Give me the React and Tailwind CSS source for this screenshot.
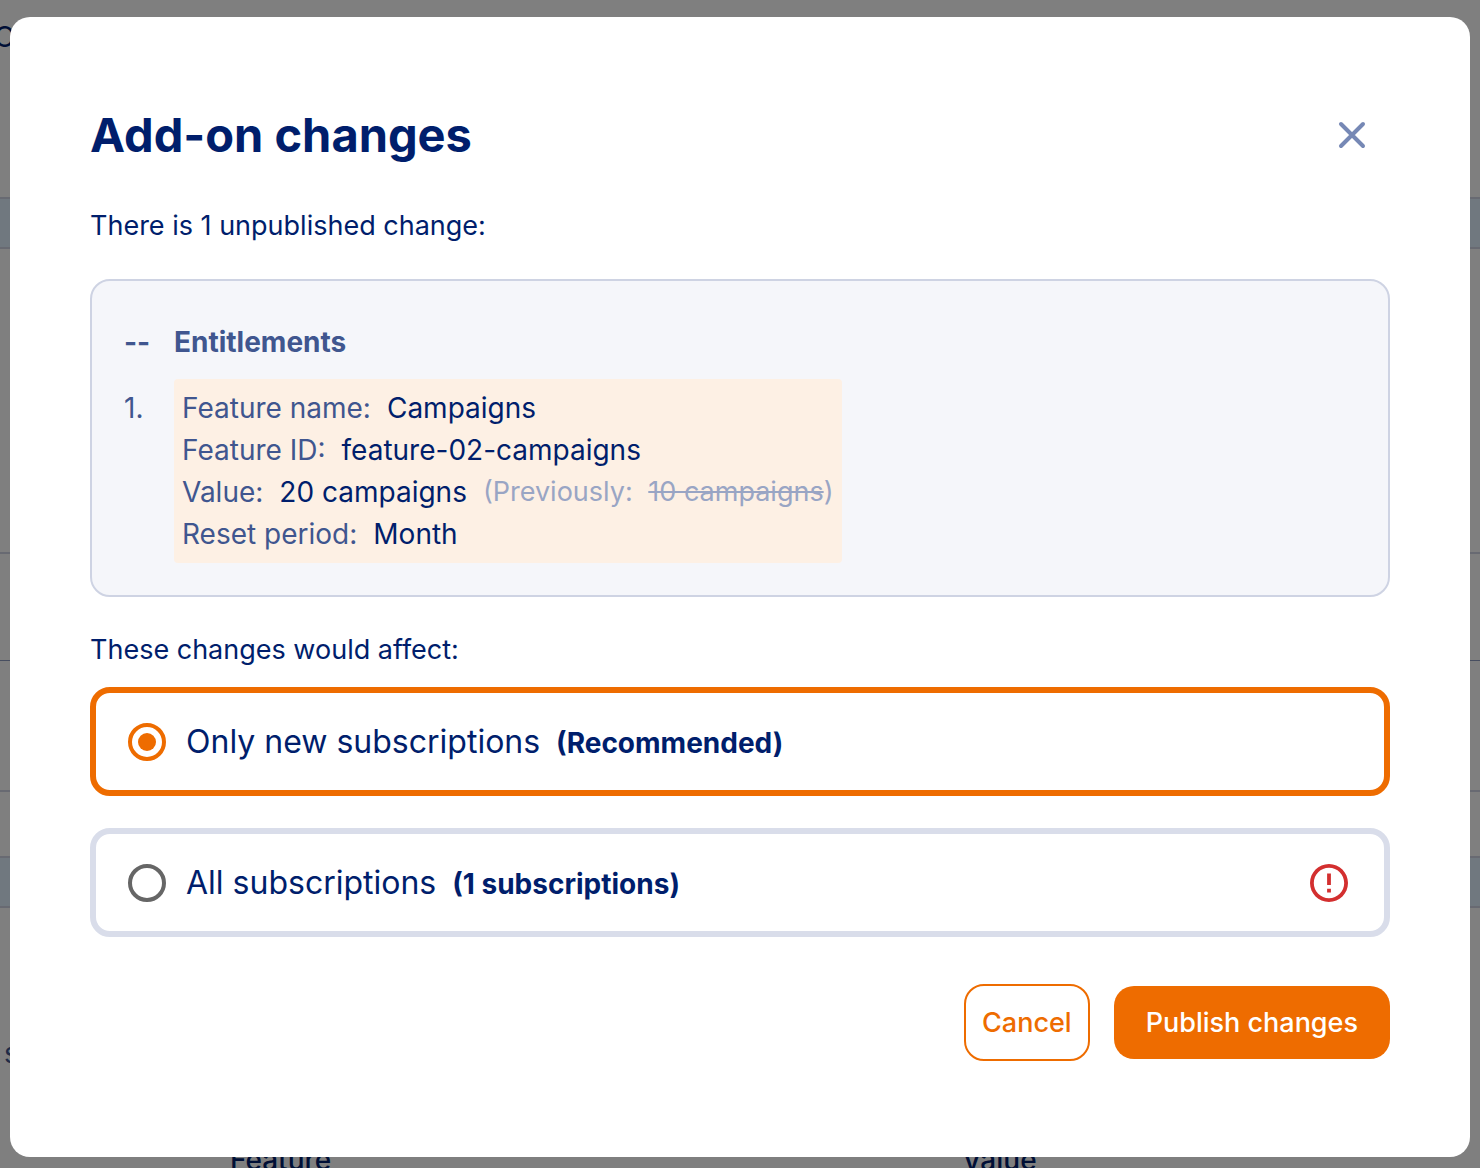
import { useState } from "react";

function BackgroundPage() {
  return (
    <div aria-hidden="true" className="flex h-screen flex-col overflow-hidden bg-white text-[28px] leading-[42px] text-[#001e6c]">
      <div className="h-[197px] shrink-0 pt-4">
        <p className="-ml-1.5">Overview</p>
      </div>
      <div className="h-[52px] shrink-0 border-y-2 border-[#d0d4e4] bg-[#e0f0ff]" />
      <div className="h-[305px] shrink-0 border-b-2 border-[#d0d4e4]" />
      <div className="h-[107px] shrink-0 border-b border-[#8f9cc0]" />
      <div className="h-[131px] shrink-0 border-b-2 border-[#d0d4e4]" />
      <div className="h-16 shrink-0" />
      <div className="h-[52px] shrink-0 border-y-2 border-[#d0d4e4] bg-[#e0f0ff]" />
      <div className="h-[231px] shrink-0 pt-[124px] pl-1">
        <p className="text-[#40568f]">settings</p>
      </div>
      <div className="grid shrink-0 grid-cols-[1fr_518px] pl-[230px] font-medium">
        <span>Feature</span>
        <span>Value</span>
      </div>
    </div>
  );
}

function CloseIcon() {
  return (
    <svg viewBox="0 0 28 28" className="h-7 w-7" fill="none" stroke="currentColor" strokeWidth="4" strokeLinecap="round" aria-hidden="true">
      <path d="M3 3 L25 25 M25 3 L3 25" />
    </svg>
  );
}

function ErrorIcon() {
  return (
    <svg viewBox="2 2 20 20" className="h-[38px] w-[38px] text-[#d32f2f]" fill="currentColor" role="img" aria-label="Warning">
      <path d="M11 15h2v2h-2zm0-8h2v6h-2zm.99-5C6.47 2 2 6.48 2 12s4.47 10 9.99 10C17.52 22 22 17.52 22 12S17.52 2 11.99 2zM12 20c-4.42 0-8-3.58-8-8s3.58-8 8-8 8 3.58 8 8-3.58 8-8 8z" />
    </svg>
  );
}

function Field({ label, value, children }) {
  return (
    <div className="flex flex-wrap gap-x-4">
      <dt className="text-[#40568f]">{label}</dt>
      <dd>{value}</dd>
      {children}
    </div>
  );
}

function Option({ value, selected, onSelect, label, note, children }) {
  return (
    <label
      className={
        "flex min-h-[109px] cursor-pointer items-center rounded-[20px] border-6 pr-9 pl-8 " +
        (selected ? "border-[#ee6c00]" : "border-[#d9ddea]")
      }
    >
      <input
        type="radio"
        name="scope"
        value={value}
        checked={selected}
        onChange={() => onSelect(value)}
        className="grid h-[38px] w-[38px] shrink-0 appearance-none place-content-center rounded-full border-4 border-[#666666] before:h-[18px] before:w-[18px] before:rounded-full checked:border-[#ee6c00] checked:before:bg-[#ee6c00]"
      />
      <span className="ml-5 flex flex-1 flex-wrap items-baseline gap-x-4 pt-0.5 text-[32px] leading-[48px]">
        {label}
        <strong className="text-[28px] font-bold">{note}</strong>
      </span>
      {children}
    </label>
  );
}

export default function App() {
  const [scope, setScope] = useState("new");
  return (
    <div className="font-['Inter',sans-serif]">
      <BackgroundPage />
      <div className="fixed inset-0 overflow-hidden bg-black/50 px-2.5 pt-[17px]">
        <div
          role="dialog"
          aria-modal="true"
          aria-labelledby="dialog-title"
          className="rounded-[20px] bg-white px-20 pt-20 pb-24 text-[28px] leading-[42px] text-[#001e6c]"
        >
          <header className="flex items-center justify-between">
            <h2 id="dialog-title" className="text-[47px] leading-[76px] font-bold">Add-on changes</h2>
            <button type="button" aria-label="Close" className="grid h-[76px] w-[76px] place-items-center text-[#7688b5]">
              <CloseIcon />
            </button>
          </header>

          <p className="mt-8 text-[27px]">There is 1 unpublished change:</p>

          <section className="mt-8 rounded-[20px] border-2 border-[#ced3e3] bg-[#f5f6fa] px-8 pt-10 pb-8">
            <div className="flex font-bold text-[#40568f]">
              <span className="w-[50px] shrink-0">--</span>
              <h3>Entitlements</h3>
            </div>
            <div className="mt-4 flex items-start">
              <span className="w-[50px] shrink-0 pt-2 text-[#40568f]">1.</span>
              <dl className="rounded-sm bg-[#fdf0e4] p-2">
                <Field label="Feature name:" value="Campaigns" />
                <Field label="Feature ID:" value="feature-02-campaigns" />
                <Field label="Value:" value="20 campaigns">
                  <dd className="text-[27px] text-[#99a5c4]">
                    (Previously: <s className="ml-2">10 campaigns</s>)
                  </dd>
                </Field>
                <Field label="Reset period:" value="Month" />
              </dl>
            </div>
          </section>

          <fieldset className="mt-8">
            <legend className="text-[27px]">These changes would affect:</legend>
            <div className="mt-4 flex flex-col gap-8">
              <Option value="new" selected={scope === "new"} onSelect={setScope} label="Only new subscriptions" note="(Recommended)" />
              <Option value="all" selected={scope === "all"} onSelect={setScope} label="All subscriptions" note="(1 subscriptions)">
                <ErrorIcon />
              </Option>
            </div>
          </fieldset>

          <footer className="mt-[47px] flex items-center justify-end gap-6 text-[27px] leading-[41px] font-medium">
            <button type="button" className="rounded-[20px] border-2 border-[#ee6c00] px-4 py-4 text-[#ee6c00]">Cancel</button>
            <button type="button" className="rounded-[20px] bg-[#ee6c00] px-8 py-4 text-white">Publish changes</button>
          </footer>
        </div>
      </div>
    </div>
  );
}
